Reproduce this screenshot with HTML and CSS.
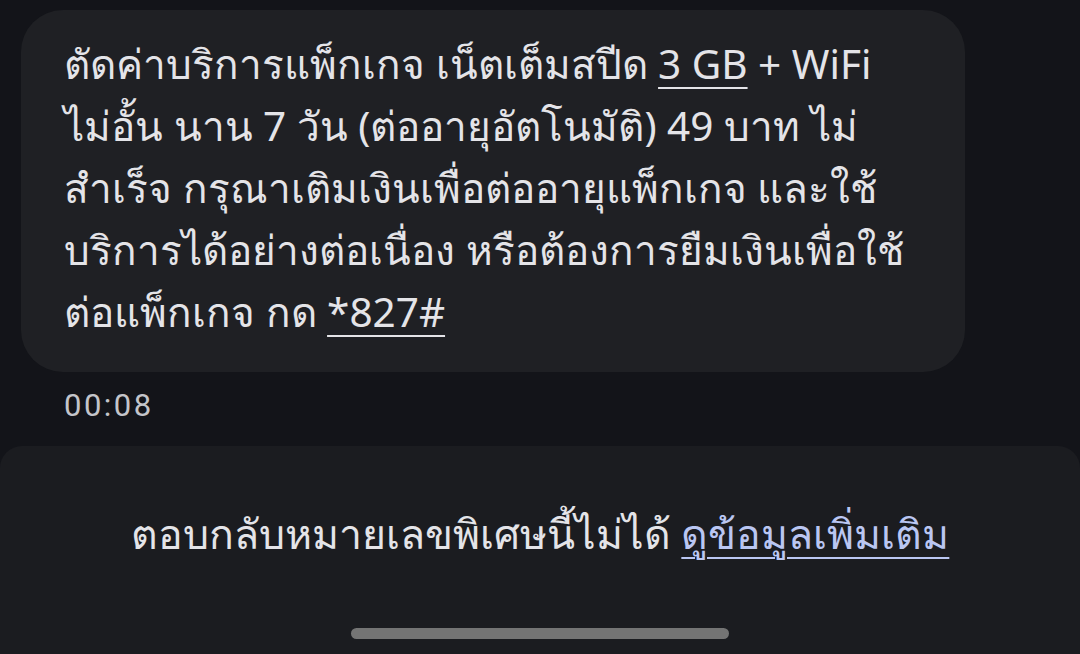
FILE: index.html
```html
<!DOCTYPE html>
<html lang="th">
<head>
  <meta charset="UTF-8" />
  <meta name="viewport" content="width=device-width, initial-scale=1.0"/>
  <title>ข้อความ</title>
  <link rel="stylesheet" href="styles.css">
</head>
<body>

  <main class="thread">
    <div class="bubble">
      ตัดค่าบริการแพ็กเกจ เน็ตเต็มสปีด <u>3 GB</u> + WiFi<br>
      ไม่อั้น นาน 7 วัน (ต่ออายุอัตโนมัติ) 49 บาท ไม่<br>
      สำเร็จ กรุณาเติมเงินเพื่อต่ออายุแพ็กเกจ และใช้<br>
      บริการได้อย่างต่อเนื่อง หรือต้องการยืมเงินเพื่อใช้<br>
      ต่อแพ็กเกจ กด <u>*827#</u>
    </div>
    <div class="time">00:08</div>
  </main>

  <footer class="notice">
    <p>ตอบกลับหมายเลขพิเศษนี้ไม่ได้ <a href="#">ดูข้อมูลเพิ่มเติม</a></p>
    <div class="home-bar"></div>
  </footer>

</body>
</html>
```

FILE: styles.css
```css
html, body { height: 100%; }
body { margin: 0; background: #131419; color: #e4e4e8; font-family: "Noto Sans", Roboto, sans-serif; display: flex; flex-direction: column; overflow: hidden; }
.thread { flex: 1; padding: 10px 0 0 21px; }
.bubble { width: 858px; background: #1f2024; border-radius: 42px; padding: 23px 43px 29px; font-size: 40.5px; line-height: 62px; white-space: nowrap; }
.bubble u { text-decoration-thickness: 2px; text-underline-offset: 8px; }
.time { margin: 15px 0 0 43px; font-size: 31px; letter-spacing: 2.5px; color: #c4c5ca; font-family: Roboto, sans-serif; }
.notice { height: 208px; background: #1b1c20; border-radius: 22px 22px 0 0; display: flex; flex-direction: column; align-items: center; }
.notice p { margin: 56px 0 0; font-size: 41px; line-height: 62px; }
.notice a { color: #bac6f2; text-decoration-thickness: 2px; text-underline-offset: 8px; }
.home-bar { width: 378px; height: 11px; border-radius: 6px; background: #747474; margin-top: 64px; }
```
